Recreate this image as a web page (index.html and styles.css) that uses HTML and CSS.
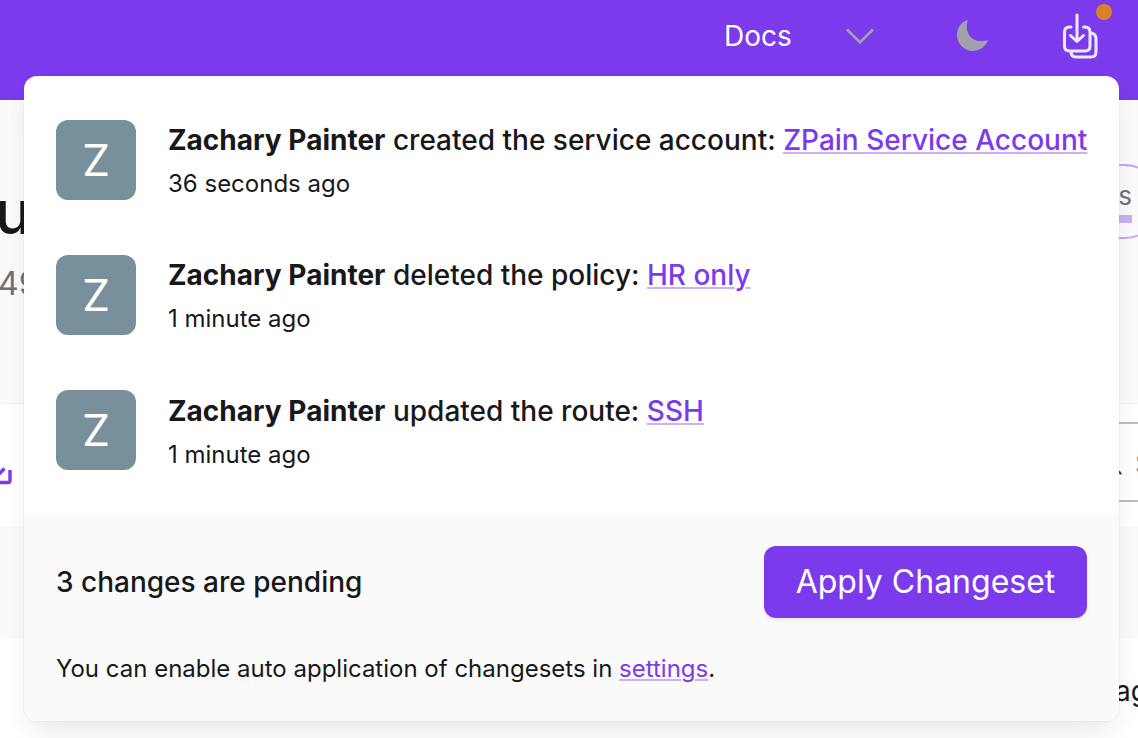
FILE: index.html
```html
<!DOCTYPE html>
<html lang="en">
<head>
<meta charset="utf-8">
<title>Changeset</title>
<link rel="stylesheet" href="styles.css">
</head>
<body>
<div class="page">
  <header class="topbar">
    <span class="docs">Docs</span>
    <svg class="chevron" width="30" height="18" viewBox="0 0 30 18"><path d="M2 2.500 15 15.500 28 2.500" fill="none" stroke="#a1a1aa" stroke-width="2.600"/></svg>
    <svg class="moon" width="34" height="34" viewBox="0 0 34 34"><path d="M12 1A17 17 0 0 0 10.700 8C10.700 16 17 22 24 22C27 22 30 21.700 32.300 20.700A16.200 16.200 0 0 1 17 32A16 16 0 0 1 1 16C1 9 5.500 2.500 12 1Z" fill="#a1a1aa"/></svg>
    <span class="inbox">
      <svg width="36" height="48" viewBox="0 0 36 48" fill="none" stroke="#ede9fe" stroke-width="3" stroke-linecap="round" stroke-linejoin="round"><path d="M15 2V28M8.500 22.500 15 28.500 21.500 22.500M9 14H7.500Q2.500 14 2.500 19V33Q2.500 38 7.500 38H23Q28 38 28 33V19Q28 14 23 14H21.500M28 20Q34 20 34 26V39Q34 44 29 44H14Q9 44 9 38.500"/></svg>
      <span class="dot"></span>
    </span>
  </header>
  <section class="hero">
    <div class="hero-text">
      <div class="hero-title">u</div>
      <div class="hero-sub">49</div>
    </div>
    <div class="pill"><span>s</span><i class="pill-bar"></i></div>
  </section>
  <section class="tools">
    <svg class="ext" width="13" height="24" viewBox="0 0 13 24" fill="none" stroke="#7c3aed" stroke-width="3.400"><path d="M-4 13 4.500 4.500M10 6V16.500Q10 18.500 8 18.500H0"/></svg>
    <div class="search"><svg width="20" height="20" viewBox="0 0 20 20" fill="none" stroke="#3f3f46" stroke-width="2.400" stroke-linecap="round"><circle cx="8" cy="8" r="6"/><path d="m12.500 12.500 5 5"/></svg><span>S</span></div>
  </section>
  <section class="band"></section>
  <section class="rows"><span>ag</span></section>

  <div class="popover">
    <div class="changes">
      <div class="change">
        <div class="avatar">Z</div>
        <div class="info">
          <div class="what"><b>Zachary Painter</b> created the service account: <a class="link">ZPain Service Account</a></div>
          <div class="when">36 seconds ago</div>
        </div>
      </div>
      <div class="change">
        <div class="avatar">Z</div>
        <div class="info">
          <div class="what"><b>Zachary Painter</b> deleted the policy: <a class="link">HR only</a></div>
          <div class="when">1 minute ago</div>
        </div>
      </div>
      <div class="change">
        <div class="avatar">Z</div>
        <div class="info">
          <div class="what"><b>Zachary Painter</b> updated the route: <a class="link">SSH</a></div>
          <div class="when">1 minute ago</div>
        </div>
      </div>
    </div>
    <div class="footer">
      <div class="pending"><span>3 changes are pending</span><button class="apply">Apply Changeset</button></div>
      <div class="hint">You can enable auto application of changesets in <a class="link">settings</a>.</div>
    </div>
  </div>
</div>
</body>
</html>
```
FILE: styles.css
```css
* { box-sizing: border-box; }
body { margin: 0; font-family: Inter, "Liberation Sans", sans-serif; color: #18181b; -webkit-font-smoothing: antialiased; }
.page { position: relative; width: 1138px; height: 738px; overflow: hidden; background: #fff; white-space: nowrap; }

.topbar { display: flex; align-items: flex-start; height: 100px; padding-left: 724px; background: #7c3aed; }
.docs { width: 121px; padding-top: 16px; font-size: 28px; line-height: 40px; color: #fff; }
.chevron { margin-top: 27px; }
.moon { margin: 19px 0 0 81px; }
.inbox { position: relative; display: flex; margin: 13px 0 0 72px; }
.dot { position: absolute; left: 34px; top: -9px; width: 16px; height: 16px; border-radius: 50%; background: #d9822b; }

.hero { display: flex; justify-content: space-between; height: 304px; background: #fafafa; border-bottom: 1px solid #f0f0f1; }
.hero-text { margin: 76px 0 0 -5px; }
.hero-title { font-size: 60px; line-height: 72px; font-weight: 500; }
.hero-sub { margin: 16px 0 0 3px; font-size: 32px; line-height: 40px; color: #71717a; }
.pill { flex: none; width: 100px; height: 75px; margin: 64px -24px 0 0; padding: 14px 28px 0 0; border: 2px solid #c4a5f7; border-radius: 38px; text-align: right; font-size: 26px; line-height: 32px; color: #71717a; }
.pill span { display: block; }
.pill-bar { display: block; height: 8px; margin-top: 3px; background: #c9b0f5; }

.tools { display: flex; justify-content: space-between; height: 122px; }
.ext { margin-top: 60px; }
.search { display: flex; gap: 12px; flex: none; width: 200px; height: 80px; margin: 18px -160px 0 0; padding: 32px 0 0 3px; border: 2px solid #bdbdbf; font-size: 28px; line-height: 16px; color: #71717a; }
.band { height: 112px; background: #fafafa; }
.rows { display: flex; justify-content: flex-end; height: 100px; padding-top: 33px; }
.rows span { margin-right: -10px; font-size: 28px; line-height: 40px; }

.popover { position: absolute; left: 24px; top: 76px; width: 1095px; height: 645px; border-radius: 13px; background: #fff; box-shadow: 0 0 0 1px rgba(24,24,27,0.03), 0 20px 30px -6px rgba(0,0,0,0.05), 0 8px 24px -4px rgba(0,0,0,0.05); }
.changes { display: flex; flex-direction: column; gap: 55.2px; height: 438px; padding: 44px 32px 0; }
.change { display: flex; gap: 32px; height: 80px; }
.avatar { flex: none; width: 80px; height: 80px; border-radius: 12px; background: #78909c; color: #fff; font-size: 44px; line-height: 81px; text-align: center; }
.info { display: flex; flex-direction: column; gap: 8px; }
.change:last-child .info { padding-top: 1px; }
.what { font-size: 28px; line-height: 40px; font-weight: 500; }
.what b { font-weight: 700; }
.when { font-size: 24px; line-height: 32px; }
.link { color: #7c3aed; text-decoration: underline; text-decoration-color: #cbb0f8; text-decoration-thickness: 2px; text-underline-offset: 2px; }
.footer { height: 207px; padding: 32px 32px 0; border-radius: 0 0 13px 13px; background: #fafafa; }
.pending { display: flex; align-items: center; justify-content: space-between; font-size: 28px; font-weight: 500; }
.apply { width: 323px; height: 72px; padding: 0; border: 0; border-radius: 12px; background: #7c3aed; color: #fff; font: 400 32px/72px Inter, sans-serif; box-shadow: 0 2px 4px rgba(0,0,0,0.07); }
.hint { margin-top: 35px; font-size: 24px; line-height: 32px; }
```
